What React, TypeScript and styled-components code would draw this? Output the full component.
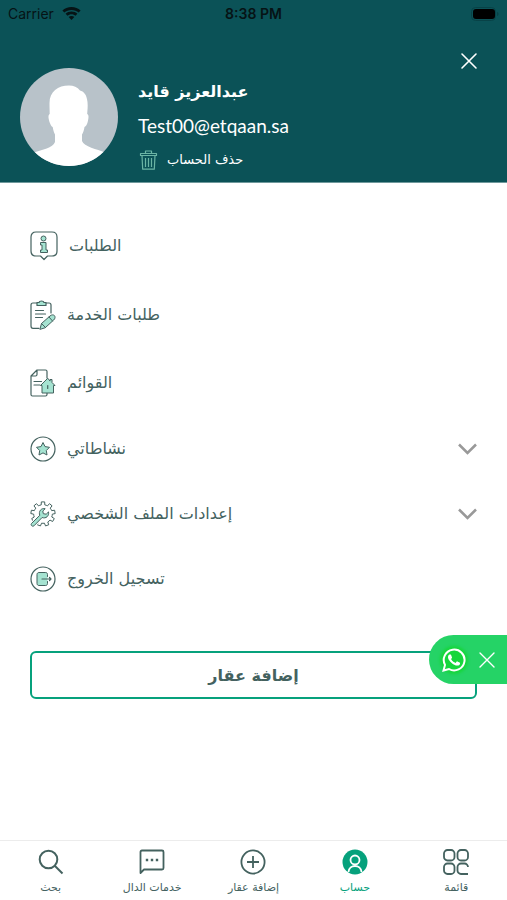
import React from "react";
import styled, { createGlobalStyle } from "styled-components";

const ink = "#44625f";
const mint = "#a5e3d1";
const brand = "#06a17c";
const arabic = '"DejaVu Sans", sans-serif';

const GlobalStyle = createGlobalStyle`
  *, *::before, *::after { box-sizing: border-box; }
  body { margin: 0; background: #fff; font-family: ${arabic}; color: ${ink}; }
  button { font: inherit; color: inherit; background: none; border: 0; padding: 0; cursor: pointer; }
  a { color: inherit; text-decoration: none; }
  svg { display: block; flex: none; }
`;

const Page = styled.div`
  min-height: 100vh;
  display: flex;
  flex-direction: column;
`;

const Header = styled.header`
  background: #0b5257;
  color: #fff;
  padding-bottom: 6px;
  border-bottom: 1px solid #6f999c;
`;

const StatusBar = styled.div`
  display: grid;
  grid-template-columns: 1fr auto 1fr;
  align-items: center;
  height: 28px;
  padding: 0 8px;
  color: #061315;
  font: 14px/28px Inter, sans-serif;
`;

const Carrier = styled.span`
  display: flex;
  align-items: center;
  gap: 8px;
`;

const Clock = styled.span`
  font-weight: 600;
`;

const BatterySlot = styled.span`
  justify-self: end;
`;

const CloseRow = styled.div`
  display: flex;
  justify-content: flex-end;
  padding: 24px 29px 0;
  height: 40px;
`;

const CloseButton = styled.button`
  width: 18px;
  height: 18px;
`;

const Profile = styled.div`
  display: flex;
  gap: 20px;
  padding: 0 20px;
`;

const Details = styled.div`
  display: flex;
  flex-direction: column;
  align-items: flex-start;
  padding-top: 8px;
`;

const Name = styled.h1`
  margin: 0;
  font-size: 16px;
  line-height: 32px;
  font-weight: 700;
`;

const Email = styled.p`
  margin: 0;
  font: 19px/36px Lato, sans-serif;
`;

const DeleteButton = styled.button`
  display: flex;
  align-items: center;
  gap: 9px;
  font-size: 13px;
  line-height: 32px;
`;

const Main = styled.main`
  flex: 1;
  padding: 48px 30px 24px;
`;

const Menu = styled.nav`
  display: flex;
  flex-direction: column;
  gap: 39px;
`;

const MenuRow = styled.button<{ $size: number }>`
  display: flex;
  align-items: center;
  gap: 11px;
  width: 100%;
  height: ${(p) => p.$size}px;
  font-size: 16px;
  line-height: 24px;
`;

const Chevron = styled.span`
  margin-inline-start: auto;
`;

const AddButton = styled.button`
  display: block;
  width: 100%;
  height: 48px;
  margin-top: 59px;
  border: 2px solid ${brand};
  border-radius: 6px;
  font-size: 16px;
  font-weight: 700;
`;

const WhatsApp = styled.div`
  position: fixed;
  right: 0;
  bottom: 216px;
  display: flex;
  align-items: center;
  gap: 12px;
  height: 49px;
  padding: 0 11px 0 13px;
  border-radius: 25px 0 0 25px;
  background: #25d366;
  color: #fff;
`;

const WhatsAppLink = styled.a`
  border-radius: 50%;
  background: #16d63c;
  box-shadow: 0 0 3px 2px #16d63c;
`;

const TabBar = styled.nav`
  position: sticky;
  bottom: 0;
  display: grid;
  grid-template-columns: repeat(5, 1fr);
  height: 60px;
  background: #fff;
  border-top: 1px solid #ececec;
`;

const Tab = styled.a<{ $active?: boolean }>`
  display: flex;
  flex-direction: column;
  align-items: center;
  gap: 4px;
  padding-top: 8px;
  font-size: 11px;
  line-height: 18px;
  white-space: nowrap;
  color: ${(p) => (p.$active ? brand : ink)};
`;

const Cross = ({ size, width }: { size: number; width: number }) => (
  <svg width={size} height={size} viewBox="0 0 18 18" fill="none" stroke="currentColor" strokeWidth={width} strokeLinecap="round">
    <path d="M2 2l14 14M16 2L2 16" />
  </svg>
);

const WifiIcon = () => (
  <svg width="19" height="14" viewBox="0 0 19 14" fill="currentColor">
    <path d="M9.500 0C5.900 0 2.700 1.400.4 3.600l1.900 2C4.200 3.900 6.700 2.900 9.500 2.900s5.300 1 7.200 2.700l1.900-2C16.300 1.400 13.100 0 9.500 0z" />
    <path d="M9.500 4.500c-2.300 0-4.400.9-5.900 2.300l1.900 2c1-1 2.400-1.600 4-1.600s3 .6 4 1.600l1.900-2c-1.500-1.400-3.600-2.300-5.900-2.300z" />
    <path d="M9.500 9c-1.100 0-2.100.4-2.800 1.100l2.800 3 2.800-3C11.600 9.400 10.600 9 9.500 9z" />
  </svg>
);

const BatteryIcon = () => (
  <svg width="28" height="14" viewBox="0 0 28 14">
    <rect x=".5" y=".5" width="24" height="13" rx="4" fill="none" stroke="#084247" />
    <rect x="2" y="2" width="22" height="10" rx="3" fill="#000" />
    <path d="M26 5c2 .5 2 3.500 0 4z" fill="#084247" />
  </svg>
);

const Avatar = () => (
  <svg width="98" height="98" viewBox="0 0 98 98" role="img" aria-label="الصورة الشخصية">
    <clipPath id="avatar"><circle cx="49" cy="49" r="49" /></clipPath>
    <g clipPath="url(#avatar)">
      <rect width="98" height="98" fill="#b8c2c9" />
      <path fill="#fff" d="M49 17.500c-11 0-19.500 6-19.500 17.500 0 5 .2 8 .2 11-2 1-1.200 5 0 8.500.8 2.300 1.800 4 3 4.500.5 3 1.300 5.500 2.300 7.500V74c-2 6-13 7.500-21 10.500L5 98h88l-8-13.500C77 81 64 79 62 73v-6.500c1.200-2 2-4.500 2.500-7.500 1.500-.5 2.500-2.500 3.200-5 .8-3.500 1.600-7-.5-8 .2-4 .8-7 .3-12-.8-8-4-10.500-7.500-11.500-2.500-3.500-6.500-5-11-5z" />
    </g>
  </svg>
);

const TrashIcon = () => (
  <svg width="20" height="20" viewBox="0 0 20 20" fill="none" stroke="#6bb5a5" strokeWidth="1.200" strokeLinejoin="round">
    <path d="M2.500 3.500h16v2h-16zM7.500 3.500V1h6v2.500M4 5.500l.7 13.700h11.600L17 5.500M7.500 8v9M10.500 8v9M13.500 8v9" />
  </svg>
);

const InfoIcon = () => (
  <svg width="28" height="30" viewBox="0 0 28 30" stroke={ink} strokeWidth="1.200" fill="none" strokeLinejoin="round">
    <path d="M6 1h16c3 0 5 2 5 5v14c0 3-2 5-5 5h-4.500L14 28.500 10.500 25H6c-3 0-5-2-5-5V6c0-3 2-5 5-5z" />
    <g fill={mint} strokeWidth="1">
      <circle cx="13.500" cy="7.500" r="2.500" />
      <path d="M10.500 11.500h5.500v7.500h1.500v2.500h-7V19H12v-5h-1.500z" />
    </g>
  </svg>
);

const ClipboardIcon = () => (
  <svg width="26" height="30" viewBox="0 0 26 30" stroke={ink} strokeWidth="1.200" fill="none" strokeLinejoin="round" strokeLinecap="round">
    <path d="M7 3H3C1.500 3 1 4 1 5v21c0 1.500.8 2.300 2 2.300h6M16 3h3c1.500 0 2 1 2 2v8" />
    <path fill={mint} d="M7 2.500h2C9.500.5 13.500.5 14 2.500h2v3H7z" />
    <path d="M5.500 10.500h8M5.500 14h10M5.500 17.500h7" />
    <g strokeWidth="1">
      <path fill={mint} d="M10 29l1.500-5.500 8.500-7.500c1.700-1.600 3.700-1.300 4.500-.3s.8 2.800-.8 4.300L15.500 27.500z" />
      <path d="M11.500 23.500l4 4M19 17l3.500 4" />
    </g>
  </svg>
);

const ListingsIcon = () => (
  <svg width="26" height="28" viewBox="0 0 26 28" stroke={ink} strokeWidth="1.200" fill="none" strokeLinejoin="round" strokeLinecap="round">
    <path d="M17 9V2.500C17 1.500 16.500 1 15.500 1H7L1 7v18.500c0 1 .5 1.500 1.500 1.500h13c1 0 1.500-.5 1.500-1.500V24M1 7h4.500C6.500 7 7 6.500 7 5.500V1M4 12.500h7.500M4 16h6" />
    <path fill={mint} strokeWidth="1" d="M17.500 9.500L10.500 16.500h1.500V24h11.500v-7.500H25l-3-3v-3h-2v1.200z" />
    <path d="M17.700 16.500v3" />
  </svg>
);

const StarIcon = () => (
  <svg width="26" height="26" viewBox="0 0 26 26" stroke={ink} strokeWidth="1.200" fill="none" strokeLinejoin="round">
    <circle cx="13" cy="13" r="12" />
    <path fill={mint} strokeWidth="1" d="M13 6.500l2 4.100 4.500.7-3.200 3.200.7 4.500-4-2.100L9 19l.7-4.500-3.200-3.200 4.500-.7z" />
  </svg>
);

const GearIcon = () => {
  const teeth = Array.from({ length: 9 }, (_, i) => {
    const at = (r: number, deg: number) => {
      const a = ((i * 40 + deg) * Math.PI) / 180;
      return `${(13 + r * Math.sin(a)).toFixed(2)} ${(13 - r * Math.cos(a)).toFixed(2)}`;
    };
    return `${at(9.3, -11)}L${at(12.2, -8)}L${at(12.2, 8)}L${at(9.3, 11)}L${at(9.3, 20)}`;
  }).join("L");
  return (
    <svg width="26" height="26" viewBox="0 0 26 26" stroke={ink} strokeWidth="1" fill="none" strokeLinejoin="round">
      <path d={`M${teeth}z`} />
      <path stroke="#fff" strokeWidth="6" d="M2 25L9 17" />
      <path fill={mint} d="M1.500 22.500l8.300-8.200c-1.500-4 1.400-7.500 5.400-6.600L12.800 10l.5 2.700 2.900.5 2.300-2.300c.9 4-2.600 7.100-6.400 5.600L4 24.800c-1.700 1.200-3.700-.7-2.500-2.300z" />
    </svg>
  );
};

const LogoutIcon = () => (
  <svg width="26" height="26" viewBox="0 0 26 26" stroke={ink} strokeWidth="1.200" fill="none" strokeLinejoin="round" strokeLinecap="round">
    <circle cx="13" cy="13" r="12" />
    <path fill={mint} strokeWidth="1" d="M17.500 10.500V8.500c0-1.200-.7-2-1.800-2H9c-1.200 0-2 .8-2 2v9c0 1.200.8 2 2 2h6.700c1.100 0 1.800-.8 1.800-2v-2" />
    <path d="M12 13h9M19.500 11.500L21 13l-1.500 1.500" />
  </svg>
);

const ChevronIcon = () => (
  <svg width="19" height="12" viewBox="0 0 19 12" fill="none" stroke="#999" strokeWidth="2.500">
    <path d="M1 1.500l8.500 8.500L18 1.500" />
  </svg>
);

const WhatsAppIcon = () => (
  <svg width="24" height="24" viewBox="0 0 24 24" fill="currentColor">
    <path d="M17.472 14.382c-.297-.149-1.758-.867-2.030-.967-.273-.099-.471-.148-.670.150-.197.297-.767.966-.940 1.164-.173.199-.347.223-.644.075-.297-.150-1.255-.463-2.390-1.475-.883-.788-1.480-1.761-1.653-2.059-.173-.297-.018-.458.130-.606.134-.133.298-.347.446-.520.149-.174.198-.298.298-.497.099-.198.050-.371-.025-.520-.075-.149-.669-1.612-.916-2.207-.242-.579-.487-.500-.669-.510-.173-.008-.371-.010-.570-.010-.198 0-.520.074-.792.372-.272.297-1.040 1.016-1.040 2.479 0 1.462 1.065 2.875 1.213 3.074.149.198 2.096 3.200 5.077 4.487.709.306 1.262.489 1.694.625.712.227 1.360.195 1.871.118.571-.085 1.758-.719 2.006-1.413.248-.694.248-1.289.173-1.413-.074-.124-.272-.198-.570-.347z" />
    <path fill="none" stroke="currentColor" strokeWidth="2" d="M1.500 22.500l1.500-5.600A10.400 10.400 0 1 1 7 21z" />
  </svg>
);

const tabStroke = { fill: "none", stroke: "currentColor", strokeWidth: 1.8 };

const SearchIcon = () => (
  <svg width="26" height="26" viewBox="0 0 26 26" {...tabStroke} strokeWidth={2}>
    <circle cx="10.500" cy="10.500" r="8.800" />
    <path d="M16.500 16.500l8 8" />
  </svg>
);

const ChatIcon = () => (
  <svg width="26" height="26" viewBox="0 0 26 26" {...tabStroke}>
    <path strokeLinejoin="round" d="M1.500 24V3c0-1 .5-1.500 1.500-1.500h20c1 0 1.500.5 1.500 1.500v16c0 1-.5 1.500-1.500 1.500H5z" />
    <path strokeWidth="2.400" d="M6.800 11h2.400M11.800 11h2.400M16.800 11h2.400" />
  </svg>
);

const PlusIcon = () => (
  <svg width="26" height="26" viewBox="0 0 26 26" {...tabStroke}>
    <circle cx="13" cy="13" r="11.600" />
    <path d="M13 7v12M7 13h12" />
  </svg>
);

const AccountIcon = () => (
  <svg width="26" height="26" viewBox="0 0 26 26" fill="none" stroke="#fff" strokeWidth="1.800">
    <circle cx="13" cy="13" r="12.500" fill="currentColor" stroke="none" />
    <circle cx="13" cy="11" r="4.500" />
    <path d="M6.500 23c.5-8 12.500-8 13 0" />
  </svg>
);

const GridIcon = () => (
  <svg width="26" height="26" viewBox="0 0 26 26" {...tabStroke}>
    <rect x="1" y="1" width="10.500" height="10.500" rx="3.500" />
    <rect x="14.500" y="1" width="10.500" height="10.500" rx="3.500" />
    <rect x="1" y="14.500" width="10.500" height="10.500" rx="3.500" />
    <path d="M25 18a3.500 3.500 0 0 0-3.500-3.500H18a3.500 3.500 0 0 0-3.500 3.500v3.500A3.500 3.500 0 0 0 18 25h7" />
  </svg>
);

const menu = [
  { label: "الطلبات", Icon: InfoIcon, size: 30 },
  { label: "طلبات الخدمة", Icon: ClipboardIcon, size: 30 },
  { label: "القوائم", Icon: ListingsIcon, size: 28 },
  { label: "نشاطاتي", Icon: StarIcon, size: 26, expandable: true },
  { label: "إعدادات الملف الشخصي", Icon: GearIcon, size: 26, expandable: true },
  { label: "تسجيل الخروج", Icon: LogoutIcon, size: 26 },
];

const tabs = [
  { label: "بحث", Icon: SearchIcon },
  { label: "خدمات الدال", Icon: ChatIcon },
  { label: "إضافة عقار", Icon: PlusIcon },
  { label: "حساب", Icon: AccountIcon, active: true },
  { label: "قائمة", Icon: GridIcon },
];

export default function App() {
  return (
    <Page lang="ar">
      <GlobalStyle />
      <Header>
        <StatusBar>
          <Carrier>Carrier <WifiIcon /></Carrier>
          <Clock>8:38 PM</Clock>
          <BatterySlot><BatteryIcon /></BatterySlot>
        </StatusBar>
        <CloseRow>
          <CloseButton aria-label="إغلاق"><Cross size={18} width={1.6} /></CloseButton>
        </CloseRow>
        <Profile>
          <Avatar />
          <Details>
            <Name>عبدالعزيز قايد</Name>
            <Email>Test00@etqaan.sa</Email>
            <DeleteButton><TrashIcon />حذف الحساب</DeleteButton>
          </Details>
        </Profile>
      </Header>
      <Main>
        <Menu>
          {menu.map(({ label, Icon, size, expandable }) => (
            <MenuRow key={label} $size={size} aria-expanded={expandable ? false : undefined}>
              <Icon />
              <span>{label}</span>
              {expandable && <Chevron><ChevronIcon /></Chevron>}
            </MenuRow>
          ))}
        </Menu>
        <AddButton>إضافة عقار</AddButton>
      </Main>
      <WhatsApp>
        <WhatsAppLink href="#whatsapp" aria-label="واتساب"><WhatsAppIcon /></WhatsAppLink>
        <button aria-label="إخفاء واتساب"><Cross size={18} width={1.4} /></button>
      </WhatsApp>
      <TabBar>
        {tabs.map(({ label, Icon, active }) => (
          <Tab key={label} href="#" $active={active} aria-current={active ? "page" : undefined}>
            <Icon />
            <span>{label}</span>
          </Tab>
        ))}
      </TabBar>
    </Page>
  );
}
